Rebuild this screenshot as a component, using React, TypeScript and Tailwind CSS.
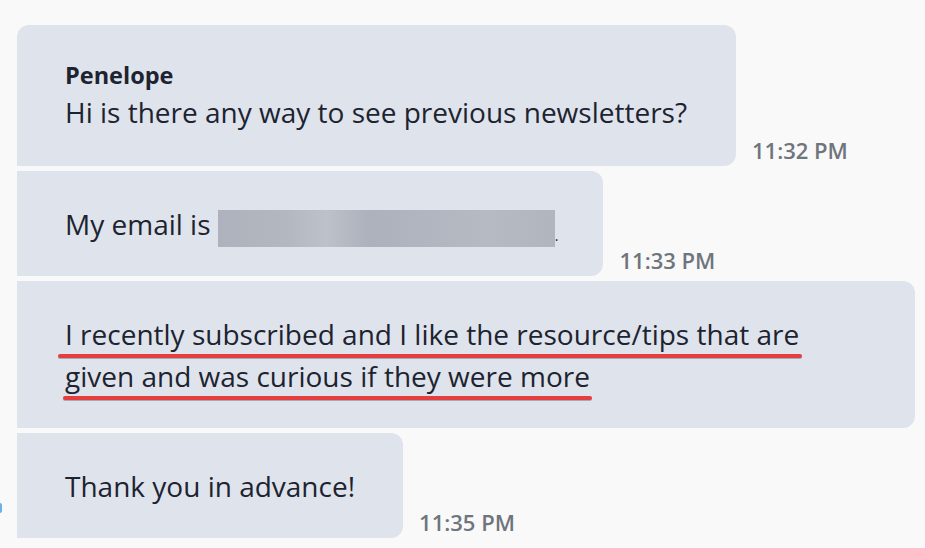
import React from "react";

type Msg = {
  id: number;
  time?: string;
};

const font = { fontFamily: '"Open Sans", "Noto Sans", sans-serif' };

// timestamp next to the bubble
const Stamp = ({ t }: { t?: string }) =>
  t ? (
    <div className="ml-4 mb-[5px] shrink-0 whitespace-nowrap text-[22px] leading-[22px] font-semibold text-[#6f757d]">
      {t}
    </div>
  ) : null;

export default function App() {
  const msgs: Msg[] = [
    { id: 1, time: "11:32 PM" },
    { id: 2, time: "11:33 PM" },
    { id: 3 },
    { id: 4, time: "11:35 PM" },
  ];

  return (
    <div
      style={font}
      className="w-[925px] h-[548px] overflow-hidden bg-[#f9f9f9] text-[#1d2330] pt-[25px] flex flex-col gap-[5px]"
    >
      {/* first message, with author */}
      <div className="flex items-end pl-[17px]">
        <div className="bg-[#dfe3ec] rounded-tl-[12px] rounded-r-[12px] pl-12 pr-[49px] pt-[34px] pb-[33px]">
          <div className="text-[23.5px] leading-[32px] font-bold">Penelope</div>
          <div className="text-[28px] leading-[42px] whitespace-nowrap">
            Hi is there any way to see previous newsletters?
          </div>
        </div>
        <Stamp t={msgs[0].time} />
      </div>

      <div className="flex items-end pl-[17px]">
        <div className="bg-[#dfe3ec] rounded-r-[12px] pl-12 pr-[45px] h-[105px] flex items-center">
          <div className="text-[28px] leading-[42px] whitespace-nowrap flex items-center">
            <span>My email is&nbsp;</span>
            <span className="inline-block w-[337px] h-[37px] mt-[10px] bg-[linear-gradient(90deg,#adb2bc,#b3b7c0_20%,#bdc1ca_32%,#acb1bb_45%,#b0b5bf_60%,#b6bac3_80%,#b1b5be)]" />
            <span className="text-[14px] mt-[24px]">.</span>
          </div>
        </div>
        <Stamp t={msgs[1].time} />
      </div>

      <div className="flex items-end pl-[17px]">
        <div className="relative w-[898px] bg-[#dfe3ec] rounded-r-[12px] pl-12 pr-12 pt-[32px] pb-[31px]">
          <div className="text-[28px] leading-[42px]">
            I recently subscribed and I like the resource/tips that are given and was curious if they were more
          </div>
          {/* red annotation strokes */}
          <div className="absolute left-[41px] top-[73px] w-[744px] h-[4px] rounded-full bg-[#e53e3e] shadow-[0_1px_0_rgba(0,0,0,0.25)]" />
          <div className="absolute left-[46px] top-[115px] w-[529px] h-[4px] rounded-full bg-[#e53e3e] shadow-[0_1px_0_rgba(0,0,0,0.25)]" />
        </div>
      </div>

      <div className="flex items-end">
        <div className="w-[17px] self-stretch flex items-center">
          <div className="w-[2px] h-[10px] mt-[45px] rounded-r-full bg-[#6ab0e8]" />
        </div>
        <div className="bg-[#dfe3ec] rounded-r-[12px] pl-12 pr-12 h-[105px] flex items-center">
          <div className="text-[28px] leading-[42px] whitespace-nowrap">Thank you in advance!</div>
        </div>
        <Stamp t={msgs[3].time} />
      </div>
    </div>
  );
}
